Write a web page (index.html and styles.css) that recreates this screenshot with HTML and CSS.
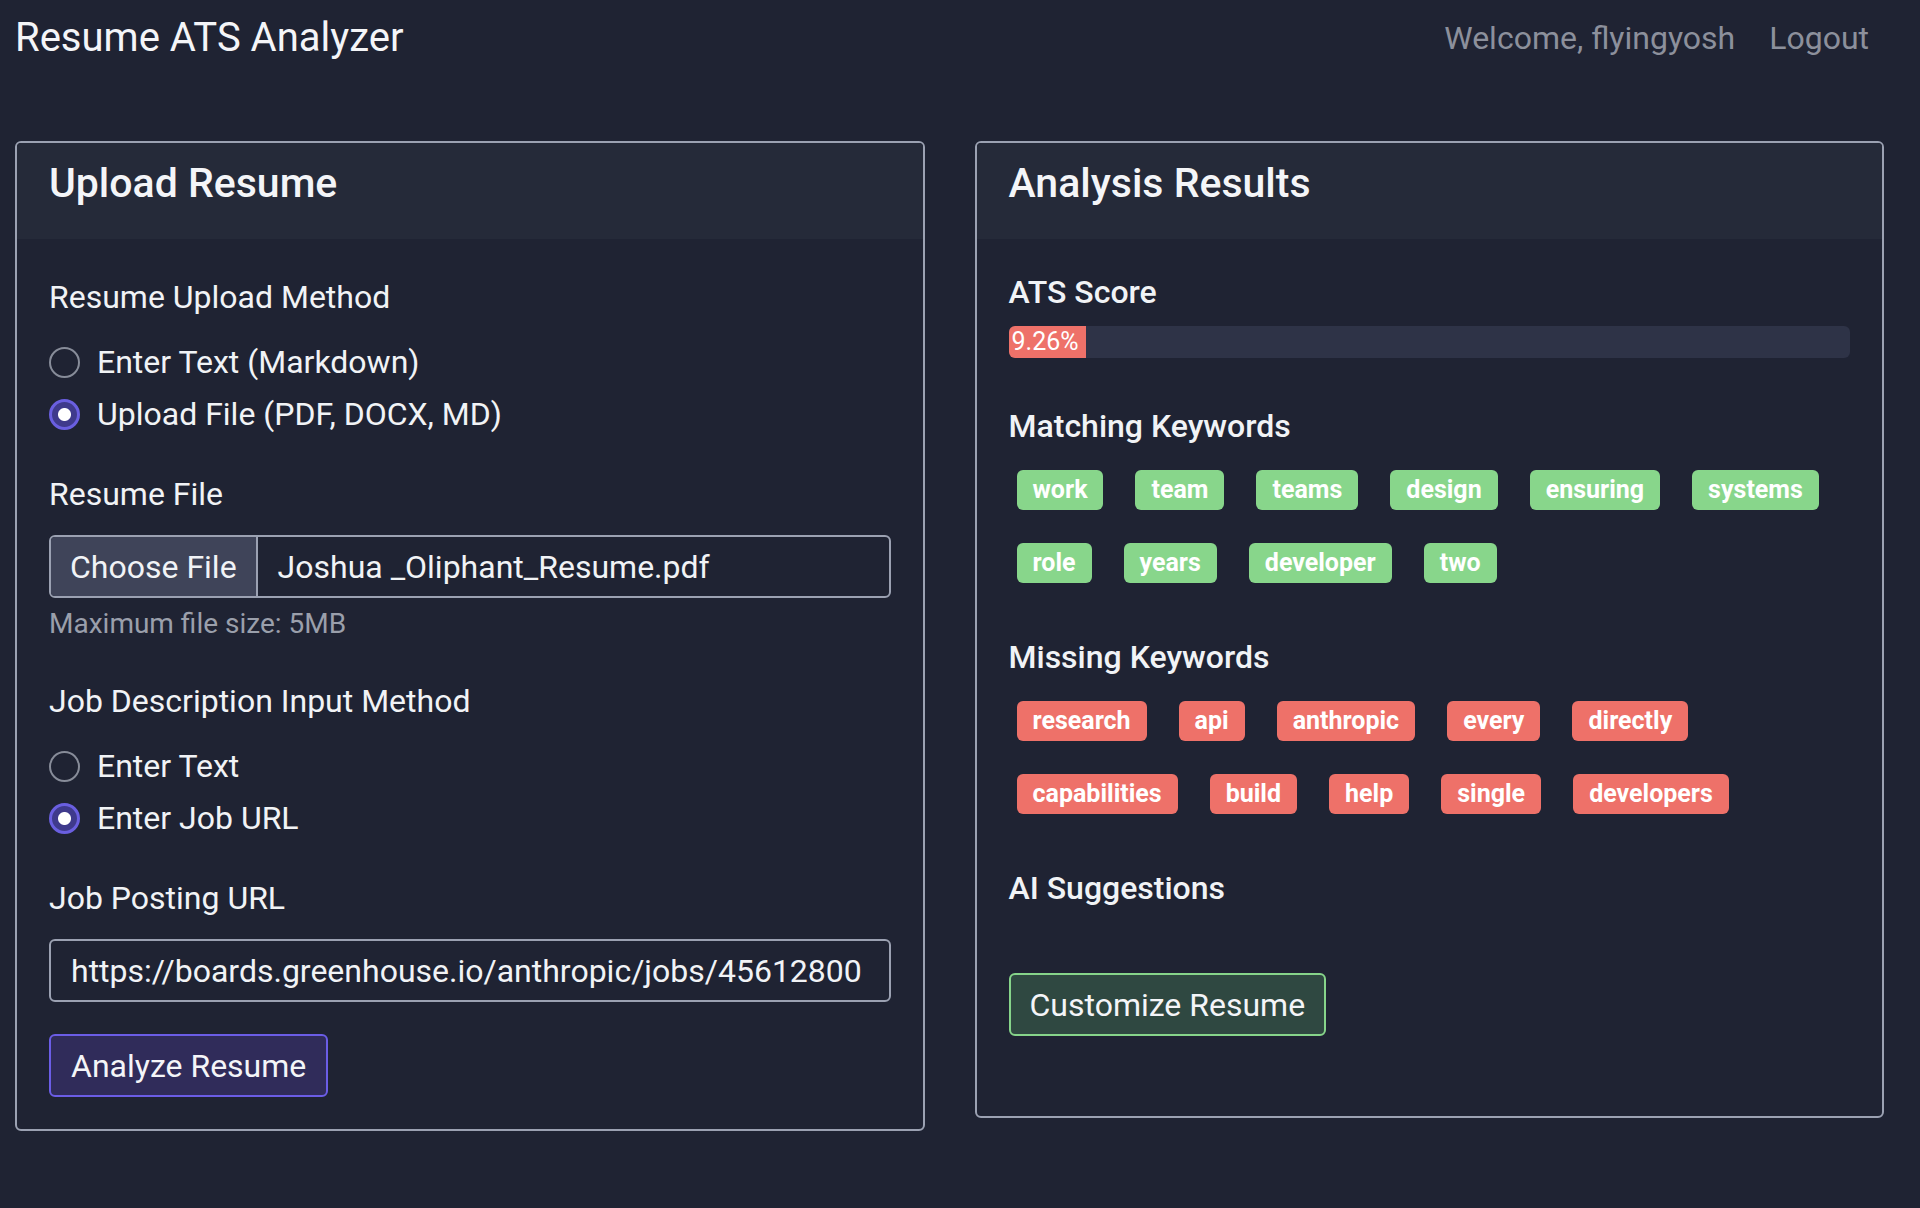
FILE: index.html
```html
<!DOCTYPE html>
<html lang="en">
<head>
<meta charset="utf-8">
<title>Resume ATS Analyzer</title>
<link rel="stylesheet" href="styles.css">
</head>
<body>
<header class="topbar">
  <div class="brand">Resume ATS Analyzer</div>
  <nav class="usernav">
    <span class="welcome">Welcome, flyingyosh</span>
    <a class="logout" href="#">Logout</a>
  </nav>
</header>

<main class="grid">
  <section class="card">
    <div class="card-header"><h2>Upload Resume</h2></div>
    <div class="card-body">
      <div class="group">
        <div class="label">Resume Upload Method</div>
        <label class="radio"><input type="radio" name="rm"><span>Enter Text (Markdown)</span></label>
        <label class="radio"><input type="radio" name="rm" checked><span>Upload File (PDF, DOCX, MD)</span></label>
      </div>
      <div class="group">
        <div class="label">Resume File</div>
        <div class="file">
          <span class="file-btn">Choose File</span>
          <span class="file-name">Joshua _Oliphant_Resume.pdf</span>
        </div>
        <div class="hint">Maximum file size: 5MB</div>
      </div>
      <div class="group">
        <div class="label">Job Description Input Method</div>
        <label class="radio"><input type="radio" name="jm"><span>Enter Text</span></label>
        <label class="radio"><input type="radio" name="jm" checked><span>Enter Job URL</span></label>
      </div>
      <div class="group">
        <div class="label">Job Posting URL</div>
        <div class="text-input">https://boards.greenhouse.io/anthropic/jobs/45612800</div>
      </div>
      <button class="btn btn-primary" type="button">Analyze Resume</button>
    </div>
  </section>

  <section class="card">
    <div class="card-header"><h2>Analysis Results</h2></div>
    <div class="card-body results">
      <h3 class="sec">ATS Score</h3>
      <div class="progress"><div class="progress-fill" style="width: 9.26%">9.26%</div></div>

      <h3 class="sec sec-gap">Matching Keywords</h3>
      <div class="tags">
        <span class="tag good">work</span>
        <span class="tag good">team</span>
        <span class="tag good">teams</span>
        <span class="tag good">design</span>
        <span class="tag good">ensuring</span>
        <span class="tag good">systems</span>
        <span class="tag good">role</span>
        <span class="tag good">years</span>
        <span class="tag good">developer</span>
        <span class="tag good">two</span>
      </div>

      <h3 class="sec sec-gap2">Missing Keywords</h3>
      <div class="tags">
        <span class="tag bad">research</span>
        <span class="tag bad">api</span>
        <span class="tag bad">anthropic</span>
        <span class="tag bad">every</span>
        <span class="tag bad">directly</span>
        <span class="tag bad">capabilities</span>
        <span class="tag bad">build</span>
        <span class="tag bad">help</span>
        <span class="tag bad">single</span>
        <span class="tag bad">developers</span>
      </div>

      <h3 class="sec sec-gap2">AI Suggestions</h3>
      <button class="btn btn-success" type="button">Customize Resume</button>
    </div>
  </section>
</main>
</body>
</html>
```

FILE: styles.css
```css
* { box-sizing: border-box; }

html, body {
  margin: 0;
  padding: 0;
  background: #1f2333;
}

body {
  font-family: Roboto, "Noto Sans", sans-serif;
  color: #f1f3f6;
  font-size: 32px;
  line-height: 1.5;
}

.topbar {
  height: 75px;
  display: flex;
  align-items: center;
  justify-content: space-between;
  padding: 0 51px 0 15px;
}

.brand {
  font-size: 40px;
  line-height: 50px;
  color: #f4f5f8;
}

.usernav {
  display: flex;
  align-items: center;
  gap: 34px;
  font-size: 32px;
  color: #8c909c;
}

.logout {
  color: #8c909c;
  text-decoration: none;
}

.grid {
  display: grid;
  grid-template-columns: 1fr 1fr;
  gap: 50px;
  align-items: start;
  padding: 0 36px 0 15px;
  margin-top: 66px;
}

.card {
  border: 2px solid #9ba1b2;
  border-radius: 6px;
  overflow: hidden;
}

.card-header {
  background: #252a39;
  height: 96px;
  padding: 14px 32px 0;
}

.card-header h2 {
  margin: 0;
  font-size: 41px;
  line-height: 52px;
  font-weight: 500;
  color: #f4f5f8;
}

.card-body {
  padding: 34px 32px 32px;
}

.group {
  margin-bottom: 32px;
}

.label {
  margin-bottom: 17px;
}

.radio {
  display: flex;
  align-items: center;
  height: 48px;
  margin-bottom: 4px;
}

.radio input {
  appearance: none;
  -webkit-appearance: none;
  width: 31px;
  height: 31px;
  margin: 0 17px 0 0;
  border: 2px solid #878c99;
  border-radius: 50%;
  background: transparent;
}

.radio input:checked {
  border: 3px solid #6a5fe0;
  background: radial-gradient(circle, #ffffff 0 6px, #3f3a8c 7px);
}

.file {
  display: flex;
  height: 63px;
  border: 2px solid #9ba1b2;
  border-radius: 6px;
  overflow: hidden;
}

.file-btn {
  display: flex;
  align-items: center;
  padding: 0 19px;
  background: #3f4459;
  border-right: 2px solid #9ba1b2;
}

.file-name {
  display: flex;
  align-items: center;
  padding: 0 20px;
}

.hint {
  margin-top: 5px;
  font-size: 28px;
  line-height: 42px;
  color: #9a9fab;
}

.text-input {
  height: 63px;
  display: flex;
  align-items: center;
  padding: 0 20px;
  border: 2px solid #9ba1b2;
  border-radius: 6px;
  white-space: nowrap;
  overflow: hidden;
}

.btn {
  font-family: inherit;
  font-size: 32px;
  line-height: 1.5;
  color: #f4f5f8;
  height: 63px;
  padding: 0 20px;
  border-radius: 6px;
  cursor: pointer;
}

.btn-primary {
  background: #302c5a;
  border: 2px solid #6b5de6;
}

.btn-success {
  background: #2f4841;
  border: 2px solid #86d48a;
  margin-top: 65px;
  padding: 0 19px;
}

.results {
  padding-top: 33px;
  padding-bottom: 80px;
}

.sec {
  margin: 0;
  font-size: 32px;
  line-height: 40px;
  font-weight: 500;
}

.sec-gap { margin-top: 48px; }
.sec-gap2 { margin-top: 54px; }

.progress {
  margin-top: 14px;
  height: 32px;
  background: #2e3347;
  border-radius: 6px;
  overflow: hidden;
}

.progress-fill {
  height: 100%;
  background: #ee7169;
  color: #ffffff;
  font-size: 25px;
  line-height: 32px;
  padding-left: 3px;
  white-space: nowrap;
}

.tags {
  display: flex;
  flex-wrap: wrap;
  column-gap: 32px;
  row-gap: 33px;
  margin-top: 24px;
  padding-left: 8px;
  max-width: 820px;
}

.tag {
  display: inline-block;
  height: 40px;
  padding: 0 16px;
  border-radius: 6px;
  font-size: 25px;
  line-height: 40px;
  font-weight: 700;
  color: #ffffff;
}

.good { background: #88d68b; }
.bad { background: #ee7169; }
```
